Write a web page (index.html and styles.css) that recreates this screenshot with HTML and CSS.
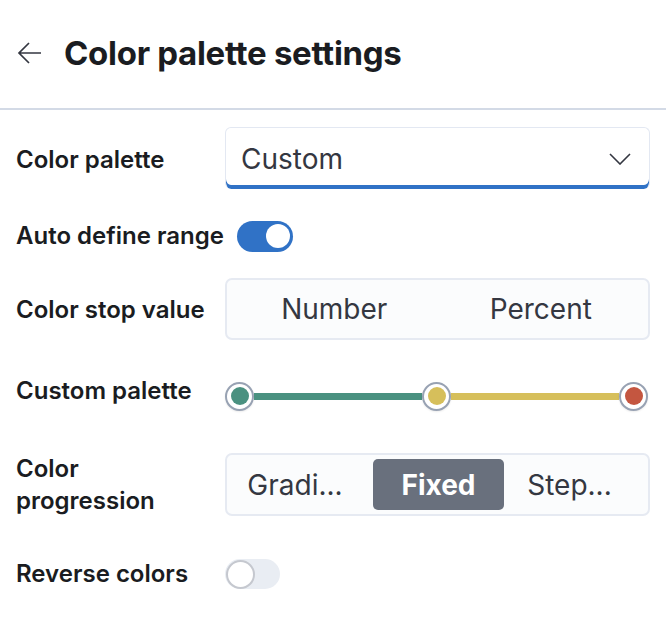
FILE: index.html
```html
<!DOCTYPE html>
<html>
<head>
<meta charset="utf-8">
<link rel="stylesheet" href="styles.css">
</head>
<body>
<div class="panel">
  <header class="header">
    <svg class="back" width="26" height="24" viewBox="0 0 26 24"><path d="M24 12H3M12 2L2 12l10 10" fill="none" stroke="#343741" stroke-width="1.7"/></svg>
    <h1 class="title">Color palette settings</h1>
  </header>
  <div class="form">
    <div class="row r1">
      <div class="label">Color palette</div>
      <div class="control">
        <div class="select">
          <span>Custom</span>
          <svg class="chev" width="22" height="12" viewBox="0 0 22 12"><path d="M1 1l10 10L21 1" fill="none" stroke="#343741" stroke-width="1.6"/></svg>
        </div>
      </div>
    </div>
    <div class="row r2">
      <div class="label auto">Auto define range</div>
      <div class="toggle on"><span class="knob"></span></div>
    </div>
    <div class="row r3">
      <div class="label">Color stop value</div>
      <div class="control">
        <div class="group">
          <div class="opt">Number</div>
          <div class="opt">Percent</div>
        </div>
      </div>
    </div>
    <div class="row r4">
      <div class="label">Custom palette</div>
      <div class="control">
        <div class="stops">
          <span class="stop"><span class="dot green"></span></span>
          <span class="seg green"></span>
          <span class="stop"><span class="dot yellow"></span></span>
          <span class="seg yellow"></span>
          <span class="stop"><span class="dot red"></span></span>
        </div>
      </div>
    </div>
    <div class="row r5">
      <div class="label">Color<br>progression</div>
      <div class="control">
        <div class="group three">
          <div class="opt first">Gradi...</div>
          <div class="opt sel">Fixed</div>
          <div class="opt last">Step...</div>
        </div>
      </div>
    </div>
    <div class="row r6">
      <div class="label">Reverse colors</div>
      <div class="control">
        <div class="toggle off"><span class="knob"></span></div>
      </div>
    </div>
  </div>
</div>
</body>
</html>
```

FILE: styles.css
```css
* { box-sizing: border-box; }
html, body { margin: 0; padding: 0; background: #fff; }
body { font-family: Inter, "Noto Sans", sans-serif; color: #1a1c21; }
.panel { width: 666px; }
.header {
  height: 110px;
  border-bottom: 2px solid #d3dae6;
  display: flex;
  align-items: center;
  padding-left: 17px;
  padding-bottom: 3px;
}
.back { display: block; margin-right: 21px; }
.title { margin: 0; font-size: 33px; font-weight: 700; color: #1a1c21; letter-spacing: -0.3px; }
.form { padding: 17px 16px 0 16px; }
.row { display: flex; align-items: center; }
.label { width: 209px; flex: none; font-size: 24px; font-weight: 600; line-height: 32px; color: #1a1c21; }
.label.auto { width: auto; margin-right: 13px; }
.control { flex: 1; }
.r1 { height: 62px; }
.r1 .label { position: relative; top: 2px; }
.r2 { height: 32px; margin-top: 31px; }
.r3 { height: 62px; margin-top: 26px; }
.r3 .label { position: relative; top: 1px; }
.r4 { height: 28px; margin-top: 42px; }
.r4 .label { position: relative; top: -5px; }
.r5 { height: 63px; margin-top: 43px; }
.r6 { height: 30px; margin-top: 43px; }
.select {
  height: 62px;
  border: 1px solid #e3e8f2;
  border-bottom: none;
  border-radius: 6px;
  box-shadow: inset 0 -4px 0 #3072c6;
  display: flex; align-items: center; justify-content: space-between;
  padding: 0 18px 0 15px;
  font-size: 28px; color: #343741;
}
.chev { display: block; }
.toggle { width: 56px; height: 31px; border-radius: 16px; position: relative; }
.toggle.on { background: #3072c6; }
.toggle.off { background: #e9edf3; width: 55px; height: 30px; }
.knob { position: absolute; border-radius: 50%; background: #fff; }
.toggle.on .knob { width: 24px; height: 24px; top: 3.5px; right: 3px; }
.toggle.off .knob { width: 29px; height: 29px; top: 0.5px; left: 1px; border: 2px solid #c5c8cf; }
.group {
  height: 62px;
  border: 2px solid #e6eaf2;
  border-radius: 7px;
  background: #fbfcfd;
  display: flex; align-items: stretch;
  padding: 4px;
}
.opt { flex: 1; display: flex; align-items: center; justify-content: center; font-size: 28px; color: #343741; border-radius: 5px; }
.group.three { height: 63px; }
.group.three .opt { flex: none; width: 139px; }
.group.three .opt.first { width: 142px; padding-right: 14px; }
.group.three .opt.last { padding-right: 8px; }
.opt.sel { background: #69707d; color: #fff; font-weight: 700; width: 131px !important; }
.stops { display: flex; align-items: center; height: 28px; margin-right: 2px; }
.stop {
  width: 29px; height: 29px; flex: none;
  border-radius: 50%;
  border: 2px solid #98a2b3;
  background: #fff;
  display: flex; align-items: center; justify-content: center;
  box-shadow: 0 1px 2px rgba(0,0,0,0.08);
}
.dot { width: 18px; height: 18px; border-radius: 50%; }
.seg { flex: 1; height: 7px; }
.green { background: #4a9180; }
.yellow { background: #d6bf5b; }
.red { background: #c45640; }
```
